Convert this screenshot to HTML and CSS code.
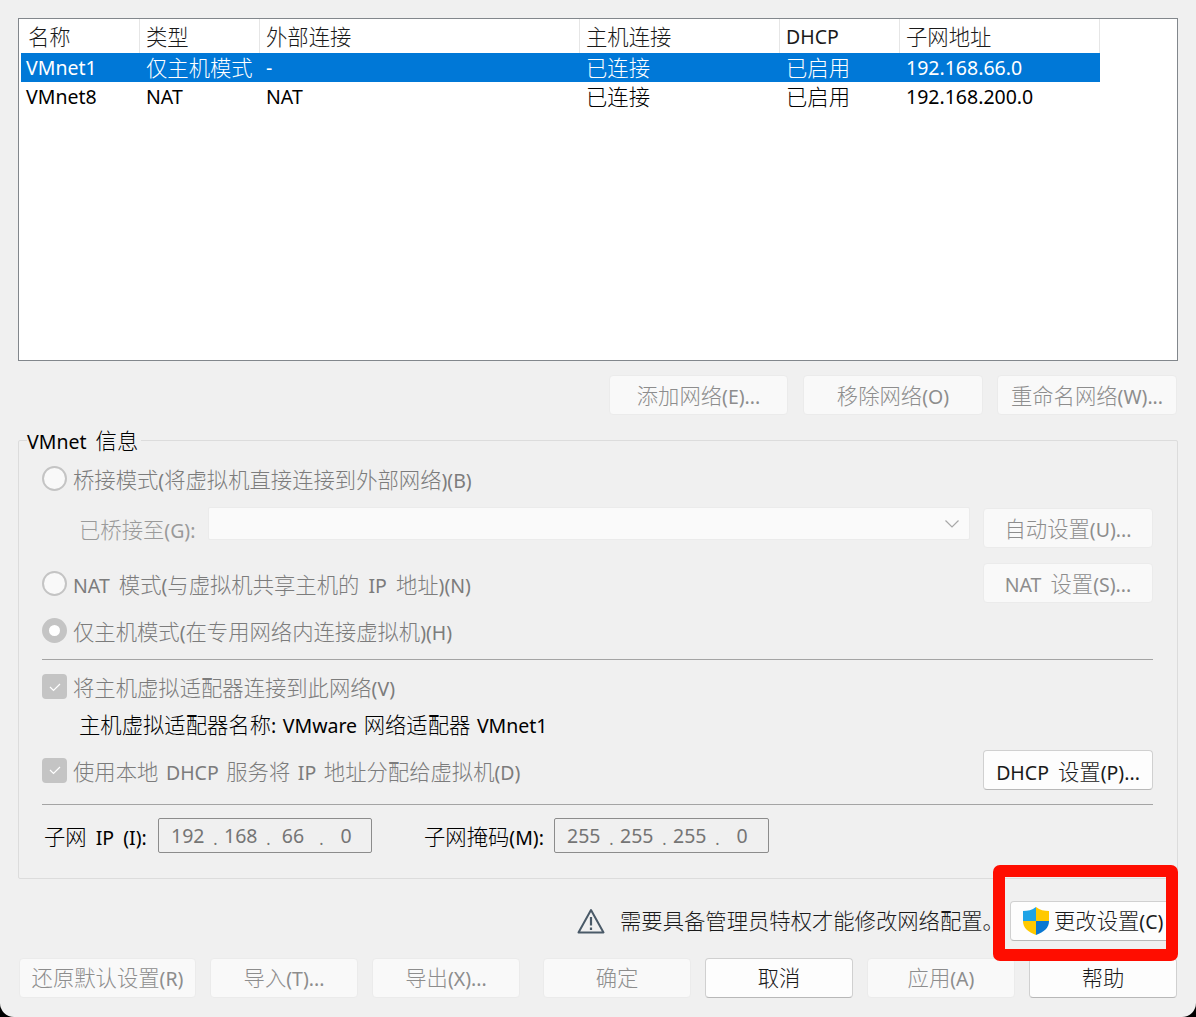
FILE: index.html
```html
<!DOCTYPE html>
<html lang="zh-CN">
<head>
<meta charset="utf-8">
<title>虚拟网络编辑器</title>
<link rel="stylesheet" href="styles.css">
</head>
<body>
<main class="page">
  <section class="list">
    <div class="row head">
      <span class="c1"><span class="z">名称</span></span><span class="c2"><span class="z">类型</span></span><span class="c3"><span class="z">外部连接</span></span><span class="c4"><span class="z">主机连接</span></span><span class="c5">DHCP</span><span class="c6"><span class="z">子网地址</span></span>
    </div>
    <div class="row selected">
      <span class="c1">VMnet1</span><span class="c2"><span class="z">仅主机模式</span></span><span class="c3">-</span><span class="c4"><span class="z">已连接</span></span><span class="c5"><span class="z">已启用</span></span><span class="c6">192.168.66.0</span>
    </div>
    <div class="row">
      <span class="c1">VMnet8</span><span class="c2">NAT</span><span class="c3">NAT</span><span class="c4"><span class="z">已连接</span></span><span class="c5"><span class="z">已启用</span></span><span class="c6">192.168.200.0</span>
    </div>
  </section>

  <div class="net-actions">
    <button class="btn off w-add" disabled><span class="z">添加网络</span>(E)...</button>
    <button class="btn off w-rem" disabled><span class="z">移除网络</span>(O)</button>
    <button class="btn off w-ren" disabled><span class="z">重命名网络</span>(W)...</button>
  </div>

  <fieldset class="group">
    <legend>VMnet <span class="z">信息</span></legend>
    <div class="line l-bridge"><span class="radio"></span><span class="dim"><span class="z">桥接模式</span>(<span class="z">将虚拟机直接连接到外部网络</span>)(B)</span></div>
    <div class="line l-bridged">
      <span class="faint bridged-label"><span class="z">已桥接至</span>(G):</span>
      <span class="select"><svg width="16" height="10" viewBox="0 0 16 10"><path d="M1.5 1.5 8 8l6.500-6.500" fill="none" stroke="#a8a8a8" stroke-width="1.2"/></svg></span>
      <button class="btn off w-side" disabled><span class="z">自动设置</span>(U)...</button>
    </div>
    <div class="line l-nat"><span class="radio"></span><span class="dim grow">NAT <span class="z">模式</span>(<span class="z">与虚拟机共享主机的</span> IP <span class="z">地址</span>)(N)</span><button class="btn off w-side" disabled>NAT <span class="z">设置</span>(S)...</button></div>
    <div class="line l-host"><span class="radio on"></span><span class="dim"><span class="z">仅主机模式</span>(<span class="z">在专用网络内连接虚拟机</span>)(H)</span></div>
    <hr class="rule r1">
    <div class="line l-adapter"><span class="check"><svg width="14" height="12" viewBox="0 0 14 12"><path d="M2 6l3.500 3.500L12 3" fill="none" stroke="#fff" stroke-width="1.2"/></svg></span><span class="dim"><span class="z">将主机虚拟适配器连接到此网络</span>(V)</span></div>
    <div class="adapter-name"><span class="z">主机虚拟适配器名称</span>: VMware <span class="z">网络适配器</span> VMnet1</div>
    <div class="line l-dhcp"><span class="check"><svg width="14" height="12" viewBox="0 0 14 12"><path d="M2 6l3.500 3.500L12 3" fill="none" stroke="#fff" stroke-width="1.2"/></svg></span><span class="dim grow"><span class="z">使用本地</span> DHCP <span class="z">服务将</span> IP <span class="z">地址分配给虚拟机</span>(D)</span><button class="btn w-side">DHCP <span class="z">设置</span>(P)...</button></div>
    <hr class="rule r2">
    <div class="line l-subnet">
      <span class="subnet-label"><span class="z">子网</span> IP (I):</span>
      <span class="ip ip-a"><i>192</i><b>.</b><i>168</i><b>.</b><i>66</i><b>.</b><i>0</i></span>
      <span class="mask-label"><span class="z">子网掩码</span>(M):</span>
      <span class="ip ip-b"><i>255</i><b>.</b><i>255</i><b>.</b><i>255</i><b>.</b><i>0</i></span>
    </div>
  </fieldset>

  <div class="notice">
    <svg class="warn" width="28" height="26" viewBox="0 0 28 26"><path d="M14 2 26.500 24.500H1.500Z" fill="none" stroke="#4a5a68" stroke-width="2" stroke-linejoin="round"/><path d="M14 9v8.500M14 19.500v2.500" stroke="#4a5a68" stroke-width="2.200" fill="none"/></svg>
    <span class="notice-text z">需要具备管理员特权才能修改网络配置。</span>
    <button class="btn change">
      <svg width="28" height="30" viewBox="0 0 28 30"><path d="M14 1C10 4 6 5 1 5v10h13V1Z" fill="#1fa3e6"/><path d="M14 1c4 3 8 4 13 4v10H14V1Z" fill="#ffc900"/><path d="M1 15c0 7 5 11 13 14V15H1Z" fill="#ffc900"/><path d="M27 15c0 7-5 11-13 14V15h13Z" fill="#0a78d2"/></svg>
      <span class="change-label"><span class="z">更改设置</span>(C)</span>
    </button>
  </div>

  <div class="footer">
    <button class="btn off f-wide" disabled><span class="z">还原默认设置</span>(R)</button>
    <button class="btn off f" disabled><span class="z">导入</span>(T)...</button>
    <button class="btn off f" disabled><span class="z">导出</span>(X)...</button>
    <button class="btn off f f-gap" disabled><span class="z">确定</span></button>
    <button class="btn f"><span class="z">取消</span></button>
    <button class="btn off f" disabled><span class="z">应用</span>(A)</button>
    <button class="btn f"><span class="z">帮助</span></button>
  </div>

  <div class="highlight"></div>
</main>
</body>
</html>
```
FILE: styles.css
```css
* { box-sizing: border-box; }
html { background: #000; }
html, body { margin: 0; height: 1017px; overflow: hidden; }
body, button {
  font-family: "Noto Sans", "Noto Sans CJK SC", sans-serif;
  font-size: 19.5px;
  word-spacing: 4px;
  color: #000;
}
.z { font-size: 21.33px; font-weight: 300; }
.page {
  position: relative;
  width: 1196px;
  height: 1017px;
  padding: 18px 18px 0;
  background: #f0f0f0;
  border-radius: 0 0 14px 14px;
  overflow: hidden;
}
.list {
  height: 343px;
  padding: 0 2px;
  background: #fff;
  border: 1px solid #82878c;
}
.row { display: flex; height: 29px; width: 1079px; line-height: 30px; white-space: nowrap; }
.row > span { padding-left: 6px; flex: none; }
.row > span.c1 { padding-left: 5px; }
.row.head { height: 34px; line-height: 36px; margin-left: 1px; color: #1a1a1a; width: 1078px; }
.row.head > span { padding-left: 6px; border-right: 1px solid #e6e6e6; height: 34px; }
.row.head > .c1 { width: 118px; padding-left: 6px; }
.row.head > .c2 { width: 120px; }
.row.selected { background: #0078d7; color: #fff; }
.c1 { width: 119px; }
.c2 { width: 120px; }
.c3 { width: 320px; }
.c4 { width: 200px; }
.c5 { width: 120px; }
.c6 { width: 200px; }

.btn {
  display: inline-flex;
  align-items: baseline;
  justify-content: center;
  height: 40px;
  padding: 3px 0 0;
  background: #fdfdfd;
  border: 1px solid #d0d0d0;
  border-bottom-color: #b8b8b8;
  border-radius: 4px;
  color: #1a1a1a;
  white-space: pre;
  flex: none;
}
.btn.off {
  background: #f9f9f9;
  border-color: #ebebeb;
  color: #8d8d8d;
}
.net-actions { display: flex; justify-content: flex-end; margin: 14px 1px 0 0; gap: 14px; }
.w-add { width: 179px; margin-right: 1px; }
.w-rem { width: 180px; }
.w-ren { width: 180px; }

.group {
  margin: 12px 0 0;
  padding: 0 24px 0 23px;
  height: 452px;
  border: 1px solid #dcdcdc;
  border-radius: 2px;
  min-width: 0;
}
.group legend { padding: 0 3px 0 0; margin-left: -15px; line-height: 27px; height: 27px; }
.line { display: flex; align-items: center; }
.dim { color: #7c7c7c; }
.faint { color: #9a9a9a; }
.grow { flex: 1; }
.radio {
  width: 25px; height: 25px; flex: none; margin-right: 6px;
  border: 2px solid #c4c4c4; border-radius: 50%; background: #f9f9f9;
}
.radio.on { background: #fff; border: 7px solid #c4c4c4; }
.check {
  width: 25px; height: 25px; flex: none; margin-right: 6px;
  display: flex; align-items: center; justify-content: center;
  background: #c4c4c4; border-radius: 4px;
}
.l-bridge { height: 25px; margin-top: 12px; }
.l-bridged { height: 40px; margin-top: 17px; }
.bridged-label { margin-left: 37px; width: 129px; flex: none; white-space: nowrap; }
.select {
  width: 762px; height: 33px; flex: none; margin-top: -9px;
  margin-right: 13px;
  display: flex; align-items: center; justify-content: flex-end; padding-right: 9px;
  background: #fafafa; border: 1px solid #ebebeb; border-radius: 2px;
}
.w-side { width: 170px; }
.l-nat { height: 40px; margin-top: 15px; }
.l-host { height: 25px; margin-top: 15px; }
.rule { margin: 0; border: 0; border-top: 1px solid #a4a4a4; }
.r1 { margin-top: 16px; }
.l-adapter { height: 25px; margin-top: 14px; }
.adapter-name { height: 30px; line-height: 30px; margin: 11px 0 0 37px; word-spacing: 1.5px; }
.l-dhcp { height: 40px; margin-top: 10px; word-spacing: 2.5px; }
.l-dhcp .btn { padding-top: 4px; }
.r2 { margin-top: 14px; }
.l-subnet { height: 35px; margin-top: 13px; }
.subnet-label { margin-left: 2px; width: 114px; flex: none; white-space: nowrap; }
.ip {
  display: flex; align-items: center; height: 35px; flex: none;
  background: #f0f0f0; border: 1px solid #8c8c8c; border-radius: 2px; color: #757575;
}
.ip i { font-style: normal; text-align: center; width: 32px; flex: none; }
.ip b { font-weight: 400; width: 21px; flex: none; text-align: center; font-size: 16px; padding: 6px 0 0 4px; }
.ip-a { width: 214px; padding-left: 12px; }
.ip-b { width: 215px; padding-left: 12px; }
.mask-label { margin-left: 52px; width: 130px; flex: none; white-space: nowrap; }

.notice { display: flex; align-items: center; height: 40px; margin-top: 22px; }
.warn { margin-left: 559px; flex: none; }
.notice-text { margin: -3px 0 0 15px; color: #1a1a1a; width: 390px; flex: none; white-space: nowrap; }
.change { width: 166px; justify-content: flex-start; align-items: center; padding: 0 0 0 11px; gap: 4px; }
.change svg { flex: none; }
.change-label { margin-top: -3px; }

.footer { display: flex; gap: 14px; margin: 17px 0 0 1px; }
.footer .btn { padding-top: 2px; }
.f-wide { width: 177px; }
.f { width: 148px; }
.f-gap { margin-left: 9px; }

.highlight {
  position: absolute;
  left: 993px; top: 865px;
  width: 185px; height: 96px;
  border: 12px solid #ff0d00;
  border-radius: 7px;
}
```
